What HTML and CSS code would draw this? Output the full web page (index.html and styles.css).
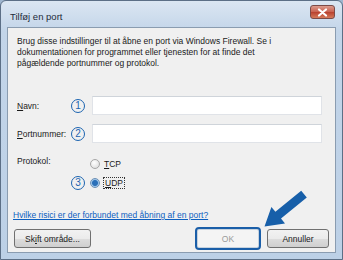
FILE: index.html
```html
<!DOCTYPE html>
<html lang="da">
<head>
<meta charset="utf-8">
<link rel="stylesheet" href="styles.css">
</head>
<body>
<div class="window">
  <div class="titlebar">
    <span class="title">Tilføj en port</span>
    <span class="close"><svg width="13" height="9" viewBox="0 0 13 9"><path d="M3 1.5 L10 7.5 M10 1.5 L3 7.5" stroke="#fff" stroke-width="2.2" stroke-linecap="round"/></svg></span>
  </div>
  <div class="client">
    <p class="intro">Brug disse indstillinger til at åbne en port via Windows Firewall. Se i dokumentationen for programmet eller tjenesten for at finde det pågældende portnummer og protokol.</p>
    <div class="form">
      <label class="lbl"><u>N</u>avn:</label>
      <span class="num">1</span>
      <span class="input"></span>
      <label class="lbl"><u>P</u>ortnummer:</label>
      <span class="num">2</span>
      <span class="input"></span>
    </div>
    <div class="proto">
      <div class="lbl proto-label">Protokol:</div>
      <span></span>
      <div class="radio-row"><span class="radio"></span><span class="rtext"><u>T</u>CP</span></div>
      <span></span>
      <span class="num">3</span>
      <div class="radio-row"><span class="radio on"></span><span class="rtext focus"><u>U</u>DP</span></div>
    </div>
    <a class="link">Hvilke risici er der forbundet med åbning af en port?</a>
    <div class="buttons">
      <span class="btn scope">Sk<u>i</u>ft område...</span>
      <span class="spacer"></span>
      <span class="btn ok">OK</span>
      <span class="btn cancel">Annuller</span>
    </div>
  </div>
  <svg class="arrow" width="343" height="260" viewBox="0 0 343 260">
    <polygon points="264.5,226.5 285,223.5 281,218.6 306.8,197.6 301.2,190.8 275.4,211.8 271.4,206.9" fill="#175fa9"/>
  </svg>
</div>
</body>
</html>
```

FILE: styles.css
```css
html, body {
  margin: 0;
  padding: 0;
  background: #9fb6cf;
}
body {
  width: 343px;
  height: 260px;
  overflow: hidden;
  font-family: "Liberation Sans", Arial, sans-serif;
  font-size: 8.5px;
  color: #1a1a1a;
}
.window {
  position: relative;
  width: 343px;
  height: 260px;
  box-sizing: border-box;
  border: 1px solid #5c6f86;
  border-radius: 6px 6px 0 0;
  background: linear-gradient(#dbe6f2, #c3d5e9 30px, #bcd0e6);
  display: flex;
  flex-direction: column;
}
.titlebar {
  height: 26px;
  display: flex;
  align-items: center;
  padding: 0 7px 0 9px;
  box-sizing: border-box;
}
.title {
  flex: 1;
  font-size: 9.5px;
  color: #1e2b3a;
  padding-top: 4px;
}
.close {
  width: 23px;
  height: 12px;
  margin-top: -4px;
  border: 1px solid #7c4b47;
  border-radius: 3px;
  background: linear-gradient(#dc9c8e, #c9604e 50%, #b8402e 51%, #d57a5a);
  display: flex;
  align-items: center;
  justify-content: center;
}
.client {
  flex: 1;
  margin: 0 6px 6px 6px;
  background: #f0f0f0;
  border: 1px solid #8a9cb0;
  padding: 8px 13px 0 9px;
  display: flex;
  flex-direction: column;
}
.intro {
  margin: 0;
  line-height: 11px;
  width: 276px;
}
.form, .proto {
  display: grid;
  grid-template-columns: 54px 14px 1fr;
  column-gap: 0;
  align-items: center;
}
.form {
  margin-top: 27px;
  row-gap: 9px;
  grid-template-columns: 54px 21px 1fr;
}
.lbl {
  white-space: nowrap;
}
.num {
  width: 14px;
  height: 14px;
  box-sizing: border-box;
  border: 1.5px solid #1c64b0;
  border-radius: 50%;
  color: #1c64b0;
  font-size: 10px;
  line-height: 11px;
  text-align: center;
  display: inline-block;
}
.input {
  height: 19px;
  box-sizing: border-box;
  background: #fff;
  border: 1px solid #e0e3e8;
  border-top-color: #cfd4da;
}
.proto {
  margin-top: 15px;
  grid-template-columns: 54px 19px 1fr;
  grid-template-rows: 12px 14px;
  row-gap: 6px;
}
.proto-label {
  align-self: start;
  margin-top: -2px;
}
.radio-row {
  display: flex;
  align-items: center;
  height: 11px;
}
.radio {
  width: 10px;
  height: 10px;
  box-sizing: border-box;
  border-radius: 50%;
  border: 1px solid #a7a7a7;
  background: radial-gradient(circle at 40% 35%, #fff, #d8d8d8);
  margin-right: 4px;
}
.radio.on {
  border-color: #6b8fb5;
  background: radial-gradient(circle, #2a6fb8 0 2.5px, #9cc4e8 3.5px, #e8f2fb);
}
.rtext.focus {
  outline: 1px dotted #333;
  outline-offset: 0;
  padding: 0 1px;
}
.link {
  display: block;
  align-self: flex-start;
  margin-top: 20px;
  line-height: 10px;
  color: #0d5fc0;
  text-decoration: underline;
  margin-left: -4px;
}
.buttons {
  margin-top: 7px;
  display: flex;
  align-items: center;
  margin-left: -3px;
  margin-right: -7px;
}
.spacer { flex: 1; }
.btn {
  height: 19px;
  box-sizing: border-box;
  border: 1px solid #707070;
  border-radius: 3px;
  background: linear-gradient(#f2f2f2, #ebebeb 50%, #dddddd 51%, #cfcfcf);
  display: flex;
  align-items: center;
  justify-content: center;
}
.scope { width: 77px; }
.ok {
  width: 66px;
  height: 23px;
  color: #9a9a9a;
  background: #f4f4f4;
  border: 2px solid #1a5ea8;
  border-radius: 4px;
  box-shadow: inset 0 0 0 1px #c6d2de;
}
.cancel {
  width: 62px;
  margin-left: 6px;
}
.arrow {
  position: absolute;
  left: -1px;
  top: -1px;
  pointer-events: none;
}
```
